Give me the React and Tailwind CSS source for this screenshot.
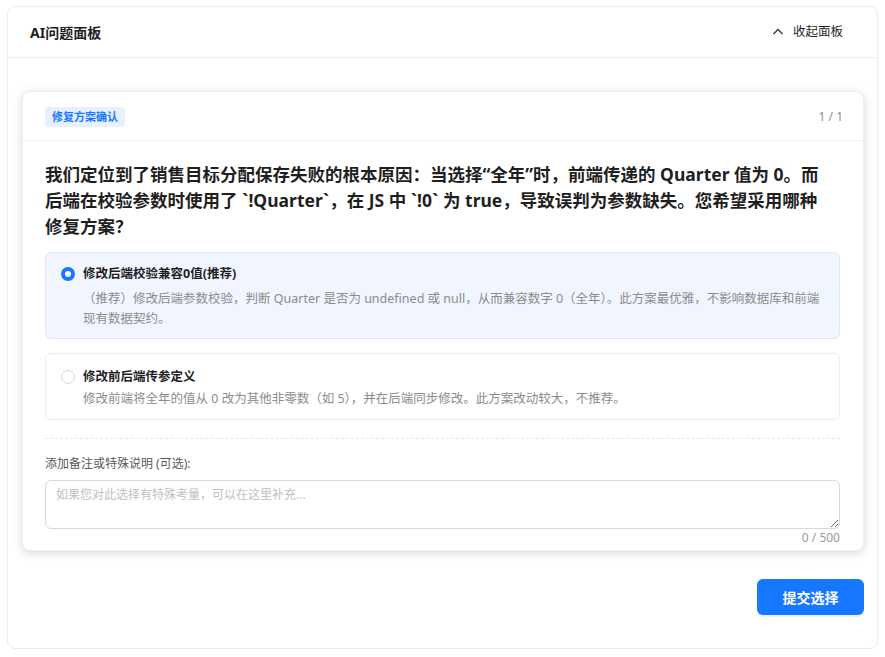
import React from "react";

const font = { fontFamily: '"Noto Sans", "Noto Sans CJK SC", sans-serif' };

export default function App() {
  return (
    <div className="w-[885px] h-[657px] bg-white pt-[6px] pl-[7px] pr-[7px] pb-[8px]" style={font}>
      <div className="h-full border border-[#ececec] rounded-[8px] flex flex-col">
        <div className="h-[51px] shrink-0 border-b border-[#ececec] flex items-center justify-between pl-[22px] pr-[34px]">
          <div className="text-[14px] font-bold text-[#1f1f1f]">AI问题面板</div>
          <div className="flex items-center gap-[9px] text-[12.5px] text-[#1f1f1f]">
            <svg width="12" height="12" viewBox="0 0 12 12" fill="none" stroke="#333" strokeWidth="1.3">
              <path d="M1.5 8 L6 3.5 L10.5 8" />
            </svg>
            <span>收起面板</span>
          </div>
        </div>
        <div className="flex-1 pl-[14px] pr-[13px] pt-[33px] flex flex-col">
          <div className="bg-white rounded-[8px] shadow-[0_2px_10px_rgba(0,0,0,0.16)] border border-[#f0f0f0]">
            <div className="h-[49px] border-b border-[#efefef] flex items-center justify-between pl-[22px] pr-[20px] pt-[2px]">
              <span className="bg-[#e6f0ff] text-[#1677ff] text-[11px] font-bold rounded-[4px] px-[7px] h-[20px] flex items-center">修复方案确认</span>
              <span className="text-[12px] text-[#8c8c8c]">1 / 1</span>
            </div>
            <div className="pl-[22px] pr-[23px] pt-[20px] pb-[3px]">
              <div className="text-[17.5px] leading-[26px] font-bold text-[#1f1f1f] pr-[17px]">
                我们定位到了销售目标分配保存失败的根本原因：当选择“全年”时，前端传递的 Quarter 值为 0。而后端在校验参数时使用了 `!Quarter`，在 JS 中 `!0` 为 true，导致误判为参数缺失。您希望采用哪种修复方案？
              </div>
              <div className="mt-[13px] flex flex-col gap-[14px]">
                <div className="bg-[#f0f5ff] border border-[#dce7fb] rounded-[6px] pl-[15px] pr-[16px] pt-[11px] pb-[9px] flex gap-[8px]">
                  <div className="mt-[3px] w-[14px] h-[14px] rounded-full bg-[#1677ff] flex items-center justify-center shrink-0">
                    <div className="w-[6px] h-[6px] rounded-full bg-white" />
                  </div>
                  <div>
                    <div className="text-[12.5px] leading-[20px] font-bold text-[#1f1f1f]">修改后端校验兼容0值(推荐)</div>
                    <div className="mt-[5px] text-[12.5px] leading-[20px] text-[#8c8c8c]">
                      （推荐）修改后端参数校验，判断 Quarter 是否为 undefined 或 null，从而兼容数字 0（全年）。此方案最优雅，不影响数据库和前端现有数据契约。
                    </div>
                  </div>
                </div>
                <div className="bg-white border border-[#ececec] rounded-[6px] pl-[15px] pr-[16px] pt-[13px] pb-[10px] flex gap-[8px]">
                  <div className="mt-[3px] w-[14px] h-[14px] rounded-full border border-[#d9d9d9] bg-white shrink-0" />
                  <div>
                    <div className="text-[12.5px] leading-[20px] font-bold text-[#1f1f1f]">修改前后端传参定义</div>
                    <div className="mt-[2px] text-[12.5px] leading-[20px] text-[#8c8c8c]">
                      修改前端将全年的值从 0 改为其他非零数（如 5），并在后端同步修改。此方案改动较大，不推荐。
                    </div>
                  </div>
                </div>
              </div>
              <div className="mt-[18px] border-t border-dashed border-[#e8e8e8]" />
              <div className="mt-[16px] text-[12px] leading-[18px] text-[#595959]">添加备注或特殊说明 (可选):</div>
              <textarea
                className="mt-[7px] block w-full h-[49px] border border-[#d9d9d9] rounded-[6px] px-[10px] py-[4px] text-[12px] leading-[20px] text-[#333] placeholder:text-[#bfbfbf] outline-none resize-y"
                placeholder="如果您对此选择有特殊考量，可以在这里补充..."
                style={font}
              />
              <div className="text-right text-[12px] leading-[18px] text-[#999] mt-[0px]">0 / 500</div>
            </div>
          </div>
          <div className="flex justify-end mt-[28px]">
            <button className="w-[107px] h-[36px] rounded-[6px] bg-[#1677ff] text-white text-[14px] font-bold shadow-[0_2px_0_rgba(5,145,255,0.1)]">提交选择</button>
          </div>
        </div>
      </div>
    </div>
  );
}
